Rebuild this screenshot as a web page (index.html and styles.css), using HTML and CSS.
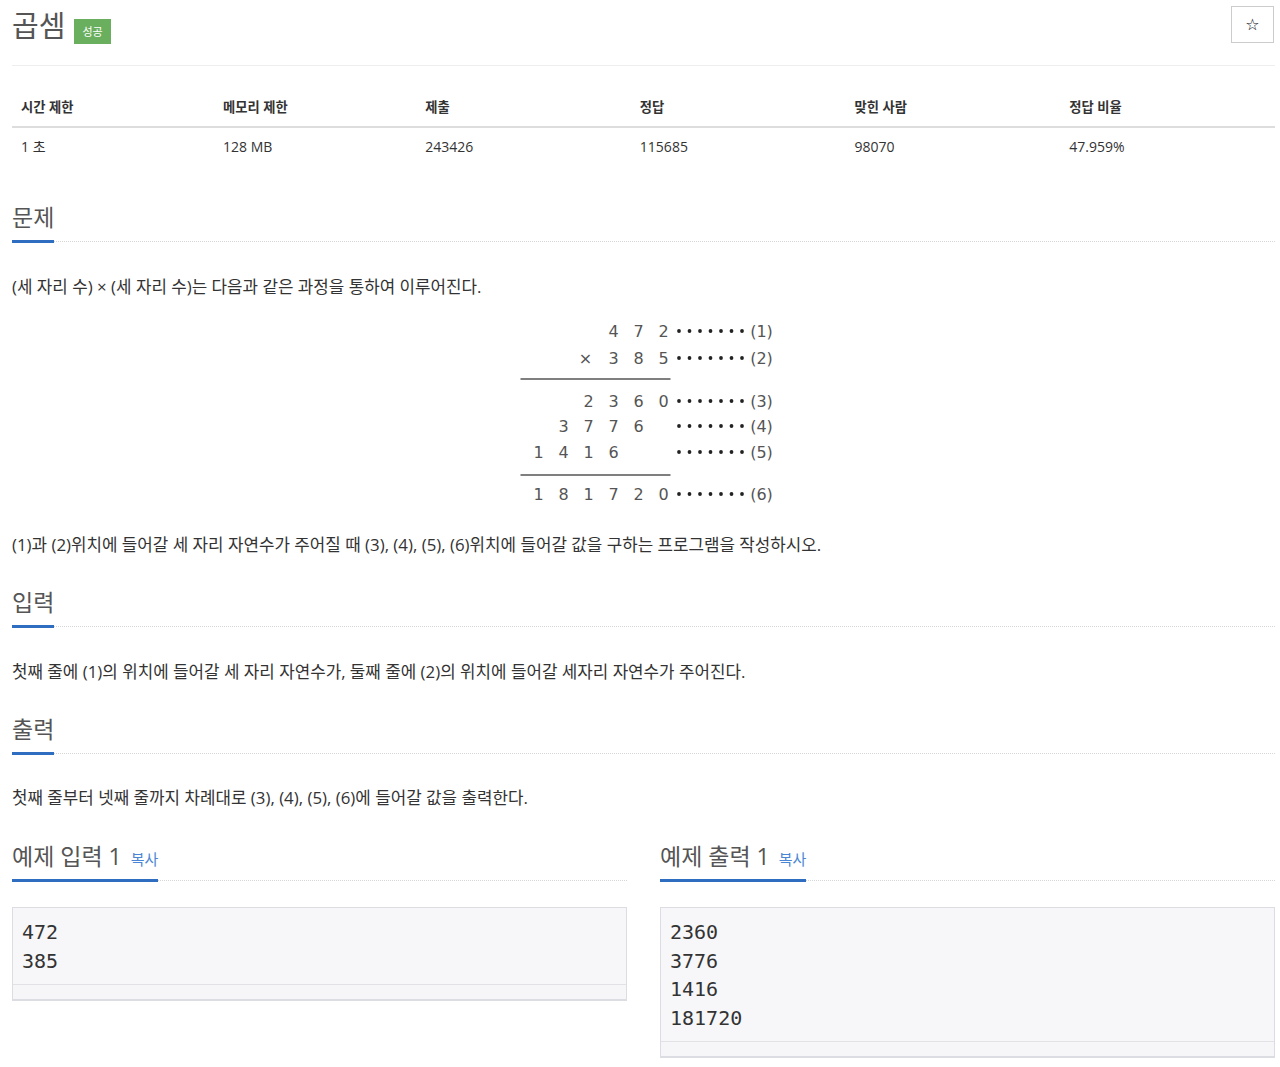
FILE: index.html
```html
<!DOCTYPE html>
<html lang="ko">
<head>
<meta charset="utf-8">
<title>곱셈</title>
<link rel="stylesheet" href="styles.css">
</head>
<body>
<div class="page">
  <div class="page-header">
    <h1 class="title"><span class="title-text">곱셈</span><span class="badge">성공</span></h1>
    <button class="star" type="button">☆</button>
  </div>

  <table class="info">
    <thead>
      <tr><th class="c1">시간 제한</th><th class="c1">메모리 제한</th><th class="c2">제출</th><th class="c2">정답</th><th class="c2">맞힌 사람</th><th class="c3">정답 비율</th></tr>
    </thead>
    <tbody>
      <tr><td>1 초</td><td>128 MB</td><td>243426</td><td>115685</td><td>98070</td><td>47.959%</td></tr>
    </tbody>
  </table>

  <section class="section first">
    <div class="headline"><h2>문제</h2></div>
    <div class="content">
      <p>(세 자리 수) × (세 자리 수)는 다음과 같은 과정을 통하여 이루어진다.</p>
      <div class="figure">
        <svg class="mult" width="270" height="194" viewBox="0 0 270 194" xmlns="http://www.w3.org/2000/svg">
          <g class="digits" text-anchor="middle" dominant-baseline="central">
            <text x="104.5" y="14">4</text><text x="129.5" y="14">7</text><text x="154.5" y="14">2</text>
            <text x="76.5" y="41" class="times">×</text><text x="104.5" y="41">3</text><text x="129.5" y="41">8</text><text x="154.5" y="41">5</text>
            <text x="79.5" y="84">2</text><text x="104.5" y="84">3</text><text x="129.5" y="84">6</text><text x="154.5" y="84">0</text>
            <text x="54.5" y="109">3</text><text x="79.5" y="109">7</text><text x="104.5" y="109">7</text><text x="129.5" y="109">6</text>
            <text x="29.5" y="135">1</text><text x="54.5" y="135">4</text><text x="79.5" y="135">1</text><text x="104.5" y="135">6</text>
            <text x="29.5" y="177">1</text><text x="54.5" y="177">8</text><text x="79.5" y="177">1</text><text x="104.5" y="177">7</text><text x="129.5" y="177">2</text><text x="154.5" y="177">0</text>
            <text x="252.5" y="14">(1)</text>
            <text x="252.5" y="41">(2)</text>
            <text x="252.5" y="84">(3)</text>
            <text x="252.5" y="109">(4)</text>
            <text x="252.5" y="135">(5)</text>
            <text x="252.5" y="177">(6)</text>
          </g>
          <g class="dots">
            <g transform="translate(0,14)"><circle cx="170" cy="0" r="1.9"/><circle cx="180.5" cy="0" r="1.9"/><circle cx="191" cy="0" r="1.9"/><circle cx="201.5" cy="0" r="1.9"/><circle cx="212" cy="0" r="1.9"/><circle cx="222.5" cy="0" r="1.9"/><circle cx="233" cy="0" r="1.9"/></g>
            <g transform="translate(0,41)"><circle cx="170" cy="0" r="1.9"/><circle cx="180.5" cy="0" r="1.9"/><circle cx="191" cy="0" r="1.9"/><circle cx="201.5" cy="0" r="1.9"/><circle cx="212" cy="0" r="1.9"/><circle cx="222.5" cy="0" r="1.9"/><circle cx="233" cy="0" r="1.9"/></g>
            <g transform="translate(0,84)"><circle cx="170" cy="0" r="1.9"/><circle cx="180.5" cy="0" r="1.9"/><circle cx="191" cy="0" r="1.9"/><circle cx="201.5" cy="0" r="1.9"/><circle cx="212" cy="0" r="1.9"/><circle cx="222.5" cy="0" r="1.9"/><circle cx="233" cy="0" r="1.9"/></g>
            <g transform="translate(0,109)"><circle cx="170" cy="0" r="1.9"/><circle cx="180.5" cy="0" r="1.9"/><circle cx="191" cy="0" r="1.9"/><circle cx="201.5" cy="0" r="1.9"/><circle cx="212" cy="0" r="1.9"/><circle cx="222.5" cy="0" r="1.9"/><circle cx="233" cy="0" r="1.9"/></g>
            <g transform="translate(0,135)"><circle cx="170" cy="0" r="1.9"/><circle cx="180.5" cy="0" r="1.9"/><circle cx="191" cy="0" r="1.9"/><circle cx="201.5" cy="0" r="1.9"/><circle cx="212" cy="0" r="1.9"/><circle cx="222.5" cy="0" r="1.9"/><circle cx="233" cy="0" r="1.9"/></g>
            <g transform="translate(0,177)"><circle cx="170" cy="0" r="1.9"/><circle cx="180.5" cy="0" r="1.9"/><circle cx="191" cy="0" r="1.9"/><circle cx="201.5" cy="0" r="1.9"/><circle cx="212" cy="0" r="1.9"/><circle cx="222.5" cy="0" r="1.9"/><circle cx="233" cy="0" r="1.9"/></g>
          </g>
          <line x1="11.5" y1="62" x2="161.5" y2="62" class="rule"/>
          <line x1="11.5" y1="158" x2="161.5" y2="158" class="rule"/>
        </svg>
      </div>
      <p>(1)과 (2)위치에 들어갈 세 자리 자연수가 주어질 때 (3), (4), (5), (6)위치에 들어갈 값을 구하는 프로그램을 작성하시오.</p>
    </div>
  </section>

  <section class="section">
    <div class="headline"><h2>입력</h2></div>
    <div class="content">
      <p>첫째 줄에 (1)의 위치에 들어갈 세 자리 자연수가, 둘째 줄에 (2)의 위치에 들어갈 세자리 자연수가 주어진다.</p>
    </div>
  </section>

  <section class="section">
    <div class="headline"><h2>출력</h2></div>
    <div class="content">
      <p>첫째 줄부터 넷째 줄까지 차례대로 (3), (4), (5), (6)에 들어갈 값을 출력한다.</p>
    </div>
  </section>

  <div class="samples">
    <section class="section sample">
      <div class="headline"><h2>예제 입력 1 <a class="copy" href="#">복사</a></h2></div>
      <div class="pre-box">
        <pre class="sampledata">472
385</pre>
        <div class="scroll-track"></div>
      </div>
    </section>
    <section class="section sample">
      <div class="headline"><h2>예제 출력 1 <a class="copy" href="#">복사</a></h2></div>
      <div class="pre-box">
        <pre class="sampledata">2360
3776
1416
181720</pre>
        <div class="scroll-track"></div>
      </div>
    </section>
  </div>
</div>
</body>
</html>
```

FILE: styles.css
```css
* { box-sizing: border-box; }

html, body {
  margin: 0;
  padding: 0;
  background: #fff;
}

body {
  font-family: "Open Sans", "Noto Sans CJK KR", sans-serif;
  color: #333;
  font-size: 14px;
}

.page {
  width: 1263px;
  margin-left: 12px;
}

.page-header {
  display: flex;
  justify-content: space-between;
  align-items: flex-start;
  border-bottom: 1px solid #eee;
  height: 66px;
}

.title {
  margin: 0;
  padding-top: 4px;
  font-size: 29px;
  font-weight: 400;
  line-height: 44px;
  color: #555;
  display: flex;
  align-items: flex-start;
}

.badge {
  display: inline-block;
  background: #6aaf5e;
  color: #fff;
  font-size: 11px;
  font-weight: 400;
  line-height: 15px;
  padding: 5px 8px;
  margin-left: 9px;
  margin-top: 15px;
}

.star {
  margin-top: 6px;
  margin-right: 1px;
  width: 43px;
  height: 37px;
  border: 1px solid #ccc;
  background: #fff;
  font-size: 16px;
  color: #111;
  padding: 0;
  line-height: 1;
  font-family: "DejaVu Sans", sans-serif;
}

.info {
  width: 100%;
  margin-top: 22px;
  border-collapse: collapse;
}

.info th {
  text-align: left;
  font-weight: 700;
  font-size: 13.3px;
  padding: 10px 9px;
  line-height: 18px;
  border-bottom: 2px solid #ddd;
}

.info td {
  padding: 10px 9px;
  line-height: 18px;
  font-size: 14px;
}

.info .c1 { width: 16%; }
.info .c2 { width: 17%; }
.info .c3 { width: 17%; }

.section { margin-top: 31px; }
.section.first { margin-top: 38px; }

.headline {
  border-bottom: 1px dotted #d6d6d6;
}

.headline h2 {
  display: inline-block;
  margin: 0 0 -2px;
  padding-bottom: 10px;
  border-bottom: 3px solid #2e6dbf;
  font-size: 23px;
  font-weight: 400;
  line-height: 26px;
  color: #555;
}

.content { margin-top: 31.5px; }
.first .content { margin-top: 32px; }

.content p {
  margin: 0;
  font-size: 16.85px;
  line-height: 26px;
  color: #333;
}

.figure {
  display: flex;
  justify-content: center;
  margin: 17px 0 21px;
}

.mult { display: block; }

.mult .digits {
  font-family: "DejaVu Sans", sans-serif;
  font-size: 16px;
  fill: #555;
}

.mult .dots { fill: #222; }

.mult .rule {
  stroke: #555;
  stroke-width: 1.5;
}

.samples {
  display: grid;
  grid-template-columns: 615px 615px;
  column-gap: 33px;
}

.sample { margin-top: 31.5px; }

.copy {
  font-size: 15px;
  line-height: 1;
  color: #4a86d4;
  text-decoration: none;
  margin-left: 3px;
}

.pre-box {
  margin-top: 26.5px;
  border: 1px solid #dcdce3;
  border-bottom: 2px solid #dcdce3;
  background: #f7f7f9;
}

.sampledata {
  margin: 0;
  padding: 10px 9px 9px 9px;
  font-family: "DejaVu Sans Mono", monospace;
  font-size: 20px;
  line-height: 28.6px;
  color: #333;
}

.scroll-track {
  height: 15px;
  border-top: 1px solid #e2e2e6;
  background: #f6f6f8;
}
```
